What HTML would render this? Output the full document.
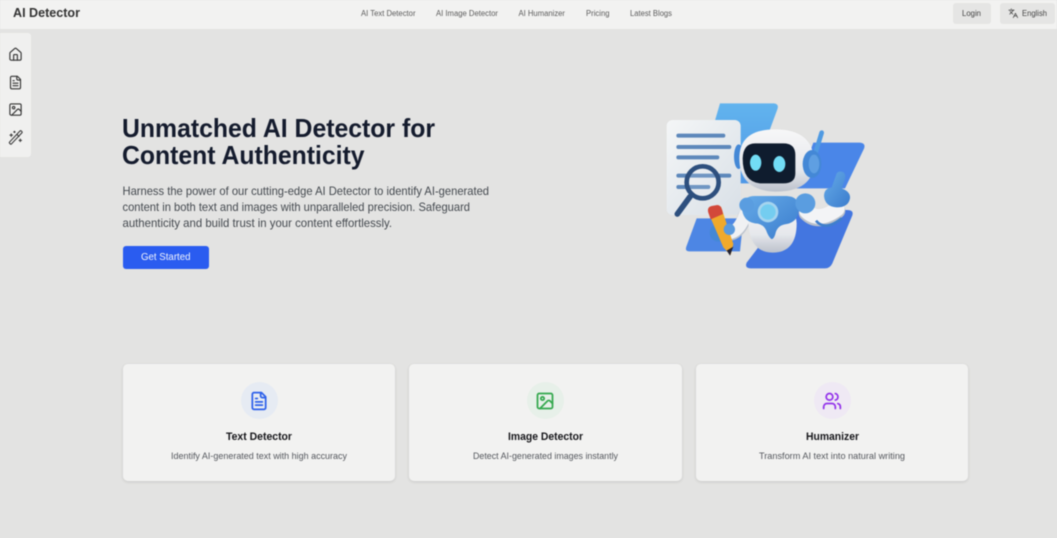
<!DOCTYPE html>
<html lang="en">
<head>
<meta charset="utf-8">
<title>AI Detector</title>
<style>
html,body{margin:0;padding:0;width:1057px;height:538px;overflow:hidden;background:#e3e3e2}
body{position:relative;font-family:"Liberation Sans",sans-serif}
.b{position:absolute}
.wrap{position:absolute;left:0;top:0;width:1057px;height:538px;filter:blur(.4px)}
.card{background:#f2f2f1;border-radius:5px;box-shadow:0 1px 3px rgba(0,0,0,.12);top:364px;height:117px}
.c{border-radius:50%;width:37px;height:37px;top:382px}
svg.i{position:absolute;fill:none;stroke-width:2;stroke-linecap:round;stroke-linejoin:round}
svg.t{position:absolute;left:0;top:0}
svg.t text{font-family:"Liberation Sans",sans-serif}
</style>
</head>
<body>
<div class="wrap">
<div class="b" style="left:0;top:0;width:1057px;height:29px;background:#f2f2f1"></div>
<div class="b" style="left:953px;top:2.5px;width:38px;height:21px;background:#e5e5e4;border-radius:3px"></div>
<div class="b" style="left:1000px;top:2.5px;width:55px;height:21px;background:#e5e5e4;border-radius:3px"></div>
<div class="b" style="left:0;top:33px;width:31px;height:124px;background:#f0f0ef;border-radius:0 3px 3px 0"></div>
<div class="b" style="left:122.7px;top:245.7px;width:86.6px;height:23.3px;background:#2a5cf0;border-radius:3px"></div>

<div class="b card" style="left:123px;width:272px"></div>
<div class="b card" style="left:409px;width:273px"></div>
<div class="b card" style="left:696px;width:272px"></div>
<div class="b c" style="left:240.5px;background:#e6ebf3"></div>
<div class="b c" style="left:526.5px;background:#e7f0e9"></div>
<div class="b c" style="left:813.5px;background:#efe9f4"></div>

<!-- sidebar icons -->
<svg class="i" style="left:8.2px;top:46.5px;stroke-width:1.8" width="15" height="15" viewBox="0 0 24 24" stroke="#333"><path d="M15 21v-8a1 1 0 0 0-1-1h-4a1 1 0 0 0-1 1v8"/><path d="M3 10a2 2 0 0 1 .7-1.5l7-6a2 2 0 0 1 2.600 0l7 6a2 2 0 0 1 .7 1.500v9a2 2 0 0 1-2 2H5a2 2 0 0 1-2-2z"/></svg>
<svg class="i" style="left:8.2px;top:74.5px;stroke-width:1.8" width="15" height="15" viewBox="0 0 24 24" stroke="#333"><path d="M15 2H6a2 2 0 0 0-2 2v16a2 2 0 0 0 2 2h12a2 2 0 0 0 2-2V7z"/><path d="M14 2v4a2 2 0 0 0 2 2h4"/><path d="M16 13H8"/><path d="M16 17H8"/><path d="M10 9H8"/></svg>
<svg class="i" style="left:8.2px;top:102px;stroke-width:1.8" width="15" height="15" viewBox="0 0 24 24" stroke="#333"><rect x="3" y="3" width="18" height="18" rx="2"/><circle cx="9" cy="9" r="2"/><path d="m21 15-3.100-3.100a2 2 0 0 0-2.800 0L6 21"/></svg>
<svg class="i" style="left:8px;top:130px;stroke-width:1.6" width="15.500" height="15.500" viewBox="0 0 24 24" stroke="#333"><path d="m21.600 2.600-1.200-1.200a1.200 1.200 0 0 0-1.700 0L2.400 18.700a1.200 1.200 0 0 0 0 1.700l1.200 1.200a1.200 1.200 0 0 0 1.700 0L21.600 4.300a1.200 1.200 0 0 0 0-1.700"/><path d="m14 7 3 3"/><path d="M5 6v4"/><path d="M19 14v4"/><path d="M10 2v2"/><path d="M7 8H3"/><path d="M21 16h-4"/><path d="M11 3H9"/></svg>

<!-- language icon -->
<svg class="i" style="left:1007.500px;top:7.500px;stroke-width:1.8" width="10.500" height="10.500" viewBox="0 0 24 24" stroke="#444"><path d="m5 8 6 6"/><path d="m4 14 6-6 2-3"/><path d="M2 5h12"/><path d="M7 2h1"/><path d="m22 22-5-10-5 10"/><path d="M14 18h6"/></svg>

<!-- card icons -->
<svg class="i" style="left:249px;top:390.500px;stroke-width:2.1" width="20" height="20" viewBox="0 0 24 24" stroke="#2f62ea"><path d="M15 2H6a2 2 0 0 0-2 2v16a2 2 0 0 0 2 2h12a2 2 0 0 0 2-2V7z"/><path d="M14 2v4a2 2 0 0 0 2 2h4"/><path d="M16 13H8"/><path d="M16 17H8"/><path d="M10 9H8"/></svg>
<svg class="i" style="left:535px;top:390.500px;stroke-width:2.1" width="20" height="20" viewBox="0 0 24 24" stroke="#35a84e"><rect x="3" y="3" width="18" height="18" rx="2"/><circle cx="9" cy="9" r="2"/><path d="m21 15-3.100-3.100a2 2 0 0 0-2.800 0L6 21"/></svg>
<svg class="i" style="left:821.500px;top:390.500px;stroke-width:2.1" width="20" height="20" viewBox="0 0 24 24" stroke="#9333ea"><path d="M16 21v-2a4 4 0 0 0-4-4H6a4 4 0 0 0-4 4v2"/><circle cx="9" cy="7" r="4"/><path d="M22 21v-2a4 4 0 0 0-3-3.900"/><path d="M16 3.100a4 4 0 0 1 0 7.800"/></svg>

<!-- robot illustration -->
<svg class="b" style="left:640px;top:90px" width="240" height="190" viewBox="0 0 720 570">
<defs>
<linearGradient id="g1" x1="0" y1="0" x2="0" y2="1"><stop offset="0" stop-color="#62b4ee"/><stop offset="1" stop-color="#4f97e6"/></linearGradient>
<linearGradient id="g2" x1="0" y1="0" x2="1" y2="1"><stop offset="0" stop-color="#f4f6f7"/><stop offset="1" stop-color="#d9e0e7"/></linearGradient>
<linearGradient id="g3" x1="0" y1="0" x2="0" y2="1"><stop offset="0" stop-color="#f7f7f8"/><stop offset=".65" stop-color="#e6e8ec"/><stop offset="1" stop-color="#bcc2cc"/></linearGradient>
<linearGradient id="g4" x1="0" y1="0" x2="1" y2="1"><stop offset="0" stop-color="#66abe8"/><stop offset="1" stop-color="#3a7ccd"/></linearGradient>
</defs>
<path d="M240 40H402Q418 42 412 58L330 280H170Z" fill="url(#g1)"/>
<path d="M520 158H660Q678 160 672 176L615 295H470Z" fill="#4a86e8"/>
<path d="M170 385H310L300 484H148Q134 484 139 470Z" fill="#4d86e4"/>
<path d="M440 360H622Q642 360 637 376L577 520Q570 535 555 535H332Q313 535 320 518Z" fill="#4376e0"/>
<rect x="80" y="90" width="222" height="285" rx="18" fill="url(#g2)"/>
<g stroke="#5d88bb" stroke-width="12" stroke-linecap="round" fill="none">
<path d="M115 137H250M115 171H268M115 202H232M115 257H268M115 291H205"/>
</g>
<circle cx="188" cy="277" r="48" fill="#fff" fill-opacity=".12" stroke="#2d4f7e" stroke-width="14"/>
<path d="M150 320 112 372" stroke="#2d4f7e" stroke-width="17" stroke-linecap="round"/>

<!-- right arm -->
<path d="M500 369Q535 404 592 362" stroke="#b9c0ca" stroke-width="48" fill="none" stroke-linecap="round"/>
<path d="M500 364Q535 398 592 357" stroke="#f3f4f6" stroke-width="44" fill="none" stroke-linecap="round"/>
<path d="M528 392Q555 425 605 385" stroke="#3f7fcc" stroke-width="8" fill="none"/>
<!-- left arm -->
<path d="M315 378Q300 423 272 431" stroke="#b9c0ca" stroke-width="42" fill="none" stroke-linecap="round"/>
<path d="M315 375Q300 420 272 428" stroke="#f0f1f3" stroke-width="38" fill="none" stroke-linecap="round"/>
<!-- body -->
<path d="M325 400Q330 330 395 330Q465 330 470 400Q470 487 398 488Q330 487 325 400Z" fill="url(#g3)"/>
<path d="M305 350Q310 318 345 318H440Q478 320 476 355Q476 395 440 402Q415 405 408 425Q402 450 394 447Q385 440 378 420Q368 400 345 400Q308 395 305 350Z" fill="url(#g4)"/>
<circle cx="384" cy="366" r="31" fill="#a5d4ef"/>
<circle cx="384" cy="366" r="23" fill="#74cdf0"/>
<circle cx="320" cy="345" r="22" fill="#5a9de0"/>
<circle cx="496" cy="340" r="30" fill="#5a9de0"/>
<!-- right hand -->
<path d="M552 318Q552 295 575 292L590 250Q598 240 612 248Q620 258 612 275L605 295Q632 305 630 325Q625 352 590 352Q555 350 552 318Z" fill="url(#g4)"/>
<!-- head -->
<ellipse cx="296" cy="200" rx="14" ry="37" fill="#4488d6"/>
<path d="M298 205Q298 118 405 118Q520 118 522 215Q522 305 405 305Q298 300 298 205Z" fill="url(#g3)"/>
<path d="M308 205Q310 160 345 160H430Q466 160 466 195V250Q466 280 430 280H360Q308 275 308 205Z" fill="#0f1c2e"/>
<ellipse cx="347" cy="218" rx="17" ry="24" fill="#72dcf5"/>
<ellipse cx="418" cy="222" rx="18" ry="24" fill="#72dcf5"/>
<path d="M526 190 545 128" stroke="#4f9ae2" stroke-width="14" stroke-linecap="round"/>
<ellipse cx="516" cy="222" rx="28" ry="42" fill="#4488d6"/>
<ellipse cx="522" cy="222" rx="16" ry="28" fill="#5f9fe2"/>
<!-- left hand + pencil -->
<circle cx="236" cy="428" r="27" fill="#4488d6"/>
<path d="M205 368 243 350 280 462 272 495 250 472Z" fill="#f0a92c"/>
<path d="M205 368Q200 352 215 348L232 345Q243 345 247 362L249 372 212 388Z" fill="#d2483a"/>
<path d="M260 482 280 470 270 497Z" fill="#223"/>
<circle cx="268" cy="418" r="17" fill="#5a9ade"/>
</svg>

<!-- text -->
<svg class="t" width="1057" height="538" viewBox="0 0 1057 538">
<text x="13" y="17" font-size="12.500" font-weight="700" fill="#333" textLength="67" lengthAdjust="spacingAndGlyphs">AI Detector</text>
<g font-size="8" fill="#5c5c5c">
<text x="361" y="16" textLength="54.500" lengthAdjust="spacingAndGlyphs">AI Text Detector</text>
<text x="436" y="16" textLength="62" lengthAdjust="spacingAndGlyphs">AI Image Detector</text>
<text x="518.500" y="16" textLength="46.500" lengthAdjust="spacingAndGlyphs">AI Humanizer</text>
<text x="586" y="16" textLength="23.500" lengthAdjust="spacingAndGlyphs">Pricing</text>
<text x="630" y="16" textLength="42" lengthAdjust="spacingAndGlyphs">Latest Blogs</text>
<text x="962" y="16" textLength="19" lengthAdjust="spacingAndGlyphs" fill="#444">Login</text>
<text x="1022" y="16" textLength="25" lengthAdjust="spacingAndGlyphs" fill="#444">English</text>
</g>
<g font-size="26" font-weight="700" fill="#141b2d">
<text x="122" y="137" textLength="313" lengthAdjust="spacingAndGlyphs">Unmatched AI Detector for</text>
<text x="122" y="164" textLength="242.500" lengthAdjust="spacingAndGlyphs">Content Authenticity</text>
</g>
<g font-size="12" fill="#44494f">
<text x="122.500" y="195" textLength="366.500" lengthAdjust="spacingAndGlyphs">Harness the power of our cutting-edge AI Detector to identify AI-generated</text>
<text x="122.500" y="211" textLength="347.500" lengthAdjust="spacingAndGlyphs">content in both text and images with unparalleled precision. Safeguard</text>
<text x="122.500" y="227" textLength="269.500" lengthAdjust="spacingAndGlyphs">authenticity and build trust in your content effortlessly.</text>
</g>
<text x="141" y="260" font-size="10.500" fill="#f2f4fc" textLength="49.500" lengthAdjust="spacingAndGlyphs">Get Started</text>
<g font-size="11" font-weight="700" fill="#16161a">
<text x="226" y="440" textLength="66" lengthAdjust="spacingAndGlyphs">Text Detector</text>
<text x="508" y="440" textLength="75" lengthAdjust="spacingAndGlyphs">Image Detector</text>
<text x="806" y="440" textLength="53" lengthAdjust="spacingAndGlyphs">Humanizer</text>
</g>
<g font-size="9" fill="#55585e">
<text x="171" y="459" textLength="176" lengthAdjust="spacingAndGlyphs">Identify AI-generated text with high accuracy</text>
<text x="473" y="459" textLength="145" lengthAdjust="spacingAndGlyphs">Detect AI-generated images instantly</text>
<text x="759" y="459" textLength="146" lengthAdjust="spacingAndGlyphs">Transform AI text into natural writing</text>
</g>
</svg>
</div>
</body>
</html>
